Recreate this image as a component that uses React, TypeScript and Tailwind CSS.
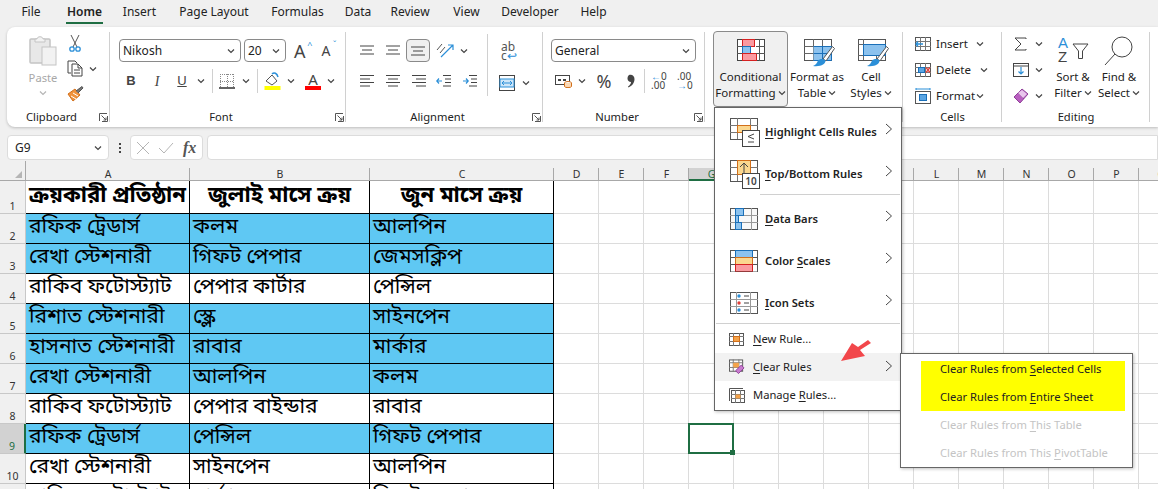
import React from "react";

const sans = "font-['Noto_Sans','Open_Sans',sans-serif]";
const ben = "font-['Noto_Sans_Bengali','Lohit_Bengali','Noto_Sans','Liberation_Sans',sans-serif]";

function Chev({ className = "", dim = false }: { className?: string; dim?: boolean }) {
  return (
    <svg width="8" height="6" viewBox="0 0 8 6" className={`shrink-0 ${className}`}>
      <path d="M1 1.5 L4 4.5 L7 1.5" fill="none" stroke={dim ? "#b5b5b5" : "#444"} strokeWidth="1.2" />
    </svg>
  );
}

function Launcher({ className = "" }: { className?: string }) {
  return (
    <svg width="9" height="9" viewBox="0 0 9 9" className={`shrink-0 ${className}`}>
      <path d="M0.5 8V0.5H8M8.5 3V8.5H3M2.5 2.5L7 7M7 4.5V7H4.5" fill="none" stroke="#555" strokeWidth="1" />
    </svg>
  );
}

function Group({ w, label, launcher, children }: { w: number; label: string; launcher?: boolean; children: React.ReactNode }) {
  return (
    <div style={{ width: w }} className="shrink-0 h-[100px] relative flex flex-col">
      <div className="flex-1 min-h-0">{children}</div>
      <div className={`h-[22px] flex items-start justify-center pt-[4px] text-[11.2px] text-[#222] leading-[16px] ${launcher ? "pr-[14px]" : ""}`}>
        <span>{label}</span>
      </div>
      {launcher && <Launcher className="absolute right-[2px] bottom-[5px]" />}
      <div className="absolute right-0 top-[5px] bottom-[5px] w-px bg-[#d0d0d0]" />
    </div>
  );
}

function GridIcon({ w, h, cols, rows, children }: { w: number; h: number; cols: number[]; rows: number[]; children?: React.ReactNode }) {
  return (
    <svg width={w} height={h} viewBox={`0 0 ${w} ${h}`} className="shrink-0">
      <rect x=".5" y=".5" width={w - 1} height={h - 1} fill="#fff" stroke="#555" />
      {cols.map((c) => (
        <path key={c} d={`M${c + 0.5} 0V${h}`} stroke="#777" />
      ))}
      {rows.map((c) => (
        <path key={c} d={`M0 ${c + 0.5}H${w}`} stroke="#777" />
      ))}
      {children}
    </svg>
  );
}

function Lines({ d }: { d: string }) {
  return (
    <svg width="16" height="14" viewBox="0 0 16 14" className="shrink-0">
      <path d={d} stroke="#444" strokeWidth="1" fill="none" />
    </svg>
  );
}

function Clipboard() {
  return (
    <Group w={103} label="Clipboard" launcher>
      <div className="flex pt-[8px] pl-[19px]">
        <div className="w-[34px] flex flex-col items-center">
          <svg width="28" height="31" viewBox="0 0 28 31">
            <rect x="1" y="4" width="20" height="24" rx="1" fill="#e8e8e8" stroke="#c4c4c4" strokeWidth="1.5" />
            <path d="M6 4H8C8 1 14 1 14 4H16V7H6Z" fill="#f2f2f2" stroke="#c4c4c4" />
            <rect x="13" y="12" width="14" height="18" fill="#f2f2f2" stroke="#c4c4c4" />
          </svg>
          <div className="text-[11.2px] text-[#a8a8a8] mt-[4px] leading-[16px]">Paste</div>
          <Chev dim className="mt-[4px]" />
        </div>
        <div className="ml-[7px] flex flex-col">
          <svg width="16" height="17" viewBox="0 0 16 17">
            <path d="M4 0L10 12M12 0L6 12" stroke="#555" fill="none" />
            <circle cx="5" cy="14" r="2.2" fill="none" stroke="#2b8fd8" strokeWidth="1.3" />
            <circle cx="11" cy="14" r="2.2" fill="none" stroke="#2b8fd8" strokeWidth="1.3" />
          </svg>
          <div className="flex items-center mt-[8px]">
            <svg width="17" height="17" viewBox="0 0 17 17">
              <path d="M4 13H1V1H8L10 3" fill="#fff" stroke="#444" />
              <path d="M5 4H11L15 8V16H5Z" fill="#fff" stroke="#444" />
              <path d="M7 10H13M7 13H13M11 4V8H15" fill="none" stroke="#444" />
            </svg>
            <Chev className="ml-[5px]" />
          </div>
          <svg width="17" height="16" viewBox="0 0 17 16" className="mt-[9px]">
            <path d="M1 8L8 3L13 9L6 15Z" fill="#f0923b" stroke="#d26f1a" />
            <path d="M4 10L9 13M6 7L11 10" stroke="#fff" />
            <path d="M9 5L15 0.5L16 2L11 7" fill="#777" stroke="#555" />
          </svg>
        </div>
      </div>
    </Group>
  );
}

function Combo({ w, label, className = "" }: { w: number; label: string; className?: string }) {
  return (
    <div style={{ width: w }} className={`h-[23px] rounded-[4px] border border-[#8a8a8a] bg-white flex items-center justify-between pl-[3px] pr-[5px] text-[12px] text-[#222] shrink-0 ${className}`}>
      <span>{label}</span>
      <Chev />
    </div>
  );
}

function Font() {
  return (
    <Group w={236} label="Font" launcher>
      <div className="pt-[12px] pl-[9px]">
        <div className="flex items-center">
          <Combo w={122} label="Nikosh" />
          <Combo w={42} label="20" className="ml-[3px]" />
          <span className="ml-[8px] text-[18px] leading-[20px] text-[#444] relative">A<span className="absolute -right-[7px] -top-[1px] text-[9px] leading-[10px] text-[#2b8fd8]">^</span></span>
          <span className="ml-[16px] text-[14px] leading-[20px] text-[#444] relative">A<span className="absolute -right-[6px] -top-[1px] text-[8px] leading-[10px] text-[#2b8fd8]">ˇ</span></span>
        </div>
        <div className="flex items-center mt-[8px] h-[22px] pl-[6px]">
          <span className="w-[12px] font-['Liberation_Sans'] font-bold text-[13px] text-[#444] text-center">B</span>
          <span className="ml-[14px] w-[12px] font-['Liberation_Serif'] italic text-[14px] text-[#444] text-center">I</span>
          <span className="ml-[13px] w-[12px] font-['Liberation_Sans'] underline text-[13px] text-[#444] text-center">U</span>
          <Chev className="ml-[9px]" />
          <div className="ml-[7px] w-px h-[24px] bg-[#d0d0d0]" />
          <svg width="16" height="16" viewBox="0 0 16 16" className="ml-[6px]">
            <path d="M1 1.5H15M1 8.5H15M1.5 1V14M8.5 1V14M14.5 1V14" stroke="#888" strokeDasharray="1 1" fill="none" />
            <path d="M0 15H16" stroke="#222" strokeWidth="1.4" />
          </svg>
          <Chev className="ml-[7px]" />
          <div className="ml-[7px] w-px h-[24px] bg-[#d0d0d0]" />
          <svg width="17" height="18" viewBox="0 0 17 18" className="ml-[6px]">
            <path d="M2 9L8 3L13 9L8 13Z" fill="#fff" stroke="#555" />
            <path d="M8 2C10 0 13 1 14 5" fill="none" stroke="#2b8fd8" strokeWidth="1.5" />
            <rect x="0.5" y="14" width="16" height="4" fill="#ffff00" />
          </svg>
          <Chev className="ml-[6px]" />
          <div className="ml-[10px] w-[16px] flex flex-col items-center text-[15px] leading-[14px] text-[#444]">
            <span>A</span>
            <span className="block w-[16px] h-[4px] bg-[#ff0000]" />
          </div>
          <Chev className="ml-[6px]" />
        </div>
      </div>
    </Group>
  );
}

const AL_T = "M1 2H15M3 6H13M1 10H15";
const AL_M = "M1 3H15M3 7H13M1 11H15";
const AL_L = "M1 1.5H15M1 5H11M1 8.5H15M1 12H11";
const AL_C = "M1 1.5H15M3 5H13M1 8.5H15M3 12H13";
const AL_R = "M1 1.5H15M5 5H15M1 8.5H15M5 12H15";

function Alignment() {
  return (
    <Group w={197} label="Alignment" launcher>
      <div className="flex pl-[13px]">
        <div className="w-[129px] pt-[12px] relative">
          <div className="flex items-center h-[23px]">
            <Lines d={AL_T} />
            <div className="ml-[10px]"><Lines d={AL_T} /></div>
            <div className="ml-[5px] w-[24px] h-[23px] rounded-[4px] border border-[#8a8a8a] bg-[#f0f0f0] flex items-center justify-center"><Lines d={AL_M} /></div>
            <svg width="19" height="17" viewBox="0 0 19 17" className="ml-[6px]">
              <path d="M1 8L6 2M4 11L9 5" stroke="#555" fill="none" />
              <path d="M5 15L17 3M12 3H17V8" stroke="#2b8fd8" strokeWidth="1.2" fill="none" />
            </svg>
            <Chev className="ml-[5px]" />
          </div>
          <div className="flex items-center mt-[8px] h-[22px]">
            <Lines d={AL_L} />
            <div className="ml-[10px]"><Lines d={AL_C} /></div>
            <div className="ml-[10px]"><Lines d={AL_R} /></div>
            <svg width="16" height="14" viewBox="0 0 16 14" className="ml-[9px]">
              <path d="M7 1.5H15M9 5H15M9 8.5H15M7 12H15" stroke="#444" fill="none" />
              <path d="M6 7H1M3 4.5L0.8 7L3 9.5" stroke="#2b8fd8" fill="none" strokeWidth="1.2" />
            </svg>
            <svg width="16" height="14" viewBox="0 0 16 14" className="ml-[10px]">
              <path d="M7 1.5H15M9 5H15M9 8.5H15M7 12H15" stroke="#444" fill="none" />
              <path d="M1 7H6M4 4.5L6.2 7L4 9.5" stroke="#2b8fd8" fill="none" strokeWidth="1.2" />
            </svg>
          </div>
          <div className="absolute right-0 top-[7px] h-[62px] w-px bg-[#d0d0d0]" />
        </div>
        <div className="pl-[13px] pt-[15px]">
          <div className="text-[12px] leading-[9px] text-[#555] w-[18px] h-[18px]">ab<br />c<span className="text-[#2b8fd8]">↩</span></div>
          <div className="flex items-center mt-[15px] -ml-[2px]">
            <svg width="16" height="16" viewBox="0 0 16 16">
              <rect x=".5" y=".5" width="15" height="15" fill="#fff" stroke="#444" />
              <rect x="1" y="4" width="14" height="8" fill="#cfe6f8" stroke="#2b8fd8" />
              <path d="M3 8H13M5 6L3 8L5 10M11 6L13 8L11 10" stroke="#2b8fd8" fill="none" />
            </svg>
            <Chev className="ml-[7px]" />
          </div>
        </div>
      </div>
    </Group>
  );
}

function NumberGroup() {
  return (
    <Group w={162} label="Number" launcher>
      <div className="pt-[12px] pl-[8px]">
        <Combo w={145} label="General" />
        <div className="flex items-center mt-[8px] h-[22px] pl-[4px]">
          <svg width="17" height="14" viewBox="0 0 17 14">
            <rect x=".5" y="1.5" width="14" height="9" fill="#fff" stroke="#444" />
            <path d="M3 6H6M8 6H11" stroke="#444" strokeWidth="2" />
            <ellipse cx="13" cy="9" rx="3.5" ry="1.5" fill="#fff" stroke="#d26f1a" />
            <path d="M9.5 9V12.5C10 14 16 14 16.5 12.5V9" fill="#fbd9b5" stroke="#d26f1a" />
          </svg>
          <Chev className="ml-[6px]" />
          <span className="ml-[10px] w-[16px] text-center text-[18px] leading-[20px] text-[#444]">%</span>
          <svg width="8" height="14" viewBox="0 0 8 14" className="ml-[15px]">
            <path d="M2 1C5 0 7.5 2 7.5 5C7.5 9 5 12 1.5 13.5L1 12.5C3 11 4 9.5 4 8C2 8 .5 6.5 .5 4.5C.5 3 1 1.8 2 1Z" fill="#444" />
          </svg>
          <div className="ml-[9px] w-px h-[24px] bg-[#d0d0d0]" />
          <div className="ml-[6px] w-[16px] text-[10px] leading-[9px] text-[#444] whitespace-nowrap"><span className="text-[#2b8fd8]">←</span>0<br />.00</div>
          <div className="ml-[10px] w-[17px] text-[10px] leading-[9px] text-[#444] whitespace-nowrap">.00<br /><span className="text-[#2b8fd8]">→</span>0</div>
        </div>
      </div>
    </Group>
  );
}

function Brush() {
  return (
    <>
      <path d="M19 20L28.5 7.5L30.5 9.5L22 22Z" fill="#fff" stroke="#555" />
      <path d="M9 27C12 26 13 24 14 21.5C16 19.5 20 19.5 21.5 21.5C21.5 25 17 28 9 27Z" fill="#2b8fd8" />
    </>
  );
}

function BigButton({ icon, l1, l2, className = "", active = false, iconClass = "h-[30px]" }: { icon: React.ReactNode; l1: string; l2: string; className?: string; active?: boolean; iconClass?: string }) {
  return (
    <div className={`flex flex-col items-center shrink-0 text-[11.5px] leading-[16px] text-[#222] ${className} ${active ? "rounded-[4px] border border-[#8a8a8a] bg-[#f0f0f0]" : ""}`}>
      <div className={`flex items-start ${iconClass}`}>{icon}</div>
      <div className="whitespace-nowrap">{l1}</div>
      <div className="whitespace-nowrap flex items-center gap-[2px]">{l2}<Chev /></div>
    </div>
  );
}

function Styles() {
  return (
    <Group w={198} label="">
      <div className="flex pt-[4px] pl-[8px]">
        <BigButton
          active
          className="w-[75px] h-[76px] pt-[7px]"
          l1="Conditional"
          l2="Formatting"
          icon={
            <svg width="28" height="23" viewBox="0 0 28 23">
              <rect x=".5" y=".5" width="27" height="21" fill="#fff" stroke="#444" />
              <rect x="5.5" y=".5" width="12" height="7" fill="#fa9aa0" stroke="#d62020" />
              <rect x="5.5" y="7.5" width="8" height="7" fill="#8cc2ee" stroke="#1a6fb8" />
              <rect x="5.5" y="14.5" width="14" height="7" fill="#fa9aa0" stroke="#d62020" />
              <path d="M22.5 0V22M0 7.5H5M0 14.5H5M19 7.5H28M19 14.5H28" stroke="#555" />
            </svg>
          }
        />
        <BigButton
          className="w-[56px] ml-[1px] pt-[8px]"
          iconClass="h-[30px] ml-[4px]"
          l1="Format as"
          l2="Table"
          icon={
            <svg width="31" height="28" viewBox="0 0 31 28" className="shrink-0">
              <rect x=".5" y=".5" width="27" height="21" fill="#fff" stroke="#555" />
              <path d="M9.5 0V21M18.5 0V21M0 7.5H27M0 14.5H27" stroke="#666" />
              <rect x="9.5" y="7.5" width="18" height="14" fill="#8cc2ee" />
              <path d="M9.5 7.5H27.5V21.5H9.5M18.5 7.5V21.5M9.5 14.5H27.5" fill="none" stroke="#1a6fb8" />
              <Brush />
            </svg>
          }
        />
        <BigButton
          className="w-[52px] pt-[8px]"
          iconClass="h-[30px] ml-[4px]"
          l1="Cell"
          l2="Styles"
          icon={
            <svg width="31" height="28" viewBox="0 0 31 28" className="shrink-0">
              <rect x=".5" y=".5" width="27" height="21" fill="#fff" stroke="#555" />
              <path d="M0 5.5H27M0 16.5H27M5.5 0V21M18.5 16V21" stroke="#666" />
              <rect x="5.5" y="5.5" width="22" height="11" fill="#8cc2ee" stroke="#1a6fb8" />
              <Brush />
            </svg>
          }
        />
      </div>
    </Group>
  );
}

function CellRow({ icon, label, chevMl, mt = "" }: { icon: React.ReactNode; label: string; chevMl: number; mt?: string }) {
  return (
    <div className={`flex items-center h-[16px] text-[11.5px] text-[#222] ${mt}`}>
      <div className="w-[16px] flex justify-center shrink-0">{icon}</div>
      <span className="ml-[5px]">{label}</span>
      <Chev className="ml-auto" />
      <span style={{ width: chevMl }} />
    </div>
  );
}

function Cells() {
  return (
    <Group w={99} label="Cells">
      <div className="pt-[9px] pl-[12px] pr-[13px]">
        <CellRow
          label="Insert"
          chevMl={5}
          icon={
            <GridIcon w={16} h={14} cols={[5, 10]} rows={[4, 9]}>
              <path d="M8 7H1M3 4.5L1 7L3 9.5" stroke="#2b8fd8" fill="none" strokeWidth="1.3" />
            </GridIcon>
          }
        />
        <CellRow
          mt="mt-[10px]"
          label="Delete"
          chevMl={1}
          icon={
            <GridIcon w={16} h={14} cols={[5, 10]} rows={[4, 9]}>
              <rect x="3.5" y="4.5" width="6" height="5" fill="#5aa5e3" stroke="#1a6fb8" />
              <path d="M11 4.5L15 9.5M15 4.5L11 9.5" stroke="#e0403a" strokeWidth="1.3" />
            </GridIcon>
          }
        />
        <CellRow
          mt="mt-[10px]"
          label="Format"
          chevMl={5}
          icon={
            <svg width="16" height="16" viewBox="0 0 16 16">
              <rect x=".5" y="3.5" width="15" height="12" fill="#fff" stroke="#555" />
              <rect x="4.5" y="6.5" width="7" height="6" fill="#5aa5e3" stroke="#1a6fb8" />
              <path d="M1 1H15M1 0V2M15 0V2" stroke="#2b8fd8" />
            </svg>
          }
        />
      </div>
    </Group>
  );
}

function Editing() {
  return (
    <Group w={148} label="Editing">
      <div className="flex pt-[9px] pl-[11px]">
        <div className="w-[36px] flex flex-col gap-[10px]">
          <div className="flex items-center h-[16px]">
            <svg width="16" height="14" viewBox="0 0 16 14"><path d="M13 2V1H2L8 7L2 13H13V12" fill="none" stroke="#444" /></svg>
            <Chev className="ml-[6px]" />
          </div>
          <div className="flex items-center h-[16px]">
            <svg width="16" height="14" viewBox="0 0 16 14">
              <rect x=".5" y=".5" width="15" height="13" fill="#fff" stroke="#444" />
              <path d="M0 3H16" stroke="#444" />
              <path d="M8 4V11M5.5 8.5L8 11L10.5 8.5" stroke="#2b8fd8" fill="none" strokeWidth="1.2" />
            </svg>
            <Chev className="ml-[6px]" />
          </div>
          <div className="flex items-center h-[16px]">
            <svg width="16" height="16" viewBox="0 0 16 16">
              <path d="M1 9L9 1L15 6L7 15Z" fill="#b95fc0" stroke="#8f3f98" />
              <path d="M5 5L11 11" stroke="#8f3f98" />
              <path d="M9 2L14 6L10 10L5 5Z" fill="#e9c5ec" />
            </svg>
            <Chev className="ml-[6px]" />
          </div>
        </div>
        <div className="flex ml-[1px]">
          <BigButton
            className="w-[46px]"
            iconClass="h-[33px]"
            l1="Sort &"
            l2="Filter"
            icon={
              <div className="relative w-[32px] h-[28px] font-['Liberation_Sans'] text-[15px] leading-[13px]">
                <span className="absolute left-[1px] top-0 text-[#2b8fd8]">A</span>
                <span className="absolute left-[1px] top-[14px] text-[#444]">Z</span>
                <svg width="17" height="17" viewBox="0 0 17 17" className="absolute left-[15px] top-[7px]">
                  <path d="M1 1H16L10.5 8V15.5H6.5V8Z" fill="#fff" stroke="#444" />
                </svg>
              </div>
            }
          />
          <BigButton
            className="w-[46px]"
            iconClass="h-[33px]"
            l1="Find &"
            l2="Select"
            icon={
              <svg width="30" height="30" viewBox="0 0 30 30">
                <circle cx="18" cy="11" r="10" fill="#fff" stroke="#444" />
                <path d="M11 18L1 29" stroke="#444" />
              </svg>
            }
          />
        </div>
      </div>
    </Group>
  );
}

function Ribbon() {
  return (
    <div className="h-[100px] ml-[7px] bg-white rounded-l-[8px] shadow-[0_1px_3px_rgba(0,0,0,0.22)] flex">
      <Clipboard />
      <Font />
      <Alignment />
      <NumberGroup />
      <Styles />
      <Cells />
      <Editing />
    </div>
  );
}

const tabs: [string, number, number][] = [
  ["File", 20, 21],
  ["Home", 37, 66],
  ["Insert", 33, 123],
  ["Page Layout", 72, 178],
  ["Formulas", 53, 271],
  ["Data", 26, 345],
  ["Review", 34, 393],
  ["View", 27, 453],
  ["Developer", 60, 500],
  ["Help", 27, 580],
];

function Tabs() {
  return (
    <div className="h-[27px] flex text-[12px] text-[#222]">
      {tabs.map(([t, w, x], i) => (
        <div key={t} style={{ marginLeft: i === 0 ? x : x - tabs[i - 1][2] - tabs[i - 1][1], width: w }} className={`h-[24px] flex items-center justify-center whitespace-nowrap relative ${t === "Home" ? "font-semibold" : ""}`}>
          {t}
          {t === "Home" && <div className="absolute left-0 right-0 bottom-0 h-[2px] bg-[#1f6e43]" />}
        </div>
      ))}
    </div>
  );
}

function FormulaBar() {
  return (
    <div className="h-[34px] pt-[8px] flex items-start">
      <div className="ml-[7px] w-[102px] h-[25px] bg-white rounded-[4px] border border-[#dcdcdc] flex items-center justify-between pl-[7px] pr-[6px] text-[12px] text-[#222]">
        <span>G9</span>
        <Chev />
      </div>
      <div className="w-[21px] h-[25px] flex flex-col items-center justify-center gap-[2px]">
        <span className="w-[2px] h-[2px] bg-[#444]" />
        <span className="w-[2px] h-[2px] bg-[#444]" />
        <span className="w-[2px] h-[2px] bg-[#444]" />
      </div>
      <div className="w-[73px] h-[25px] bg-white rounded-[4px] border border-[#dcdcdc] flex items-center pl-[5px]">
        <svg width="14" height="14" viewBox="0 0 14 14"><path d="M1 1L13 13M13 1L1 13" stroke="#b5b5b5" /></svg>
        <svg width="16" height="12" viewBox="0 0 16 12" className="ml-[8px]"><path d="M1 6L6 11L15 1" fill="none" stroke="#b5b5b5" /></svg>
        <span className="ml-[9px] font-['Liberation_Serif'] italic font-bold text-[16px] text-[#555]">fx</span>
      </div>
      <div className="ml-[4px] flex-1 h-[25px] bg-white rounded-l-[4px] border border-[#dcdcdc]" />
    </div>
  );
}

const rows: [string, string, string][] = [
  ["ক্রয়কারী প্রতিষ্ঠান", "জুলাই মাসে ক্রয়", "জুন মাসে ক্রয়"],
  ["রফিক ট্রেডার্স", "কলম", "আলপিন"],
  ["রেখা স্টেশনারী", "গিফট পেপার", "জেমসক্লিপ"],
  ["রাকিব ফটোস্ট্যাট", "পেপার কার্টার", "পেন্সিল"],
  ["রিশাত স্টেশনারী", "স্কেল", "সাইনপেন"],
  ["হাসনাত স্টেশনারী", "রাবার", "মার্কার"],
  ["রেখা স্টেশনারী", "আলপিন", "কলম"],
  ["রাকিব ফটোস্ট্যাট", "পেপার বাইন্ডার", "রাবার"],
  ["রফিক ট্রেডার্স", "পেন্সিল", "গিফট পেপার"],
  ["রেখা স্টেশনারী", "সাইনপেন", "আলপিন"],
  ["রাকিব ফটোস্ট্যাট", "মার্কার", "গিফট পেপার"],
];
const blue = [1, 2, 4, 5, 6, 8];
const extra = ["D", "E", "F", "G", "H", "I", "J", "K", "L", "M", "N", "O", "P", "Q"];

function Sheet() {
  return (
    <div className="relative grid grid-cols-[26px_164px_180px_184px_repeat(14,45px)] grid-rows-[20px_33px_repeat(11,30px)] overflow-hidden h-[328px] text-[10.5px] text-[#333] leading-none">
      <div className="bg-[#f0f0f0] border-r border-b border-[#a8a8a8] relative">
        <div className="absolute right-[3px] bottom-[2px] w-0 h-0 border-l-[7px] border-l-transparent border-b-[7px] border-b-[#b5b5b5]" />
      </div>
      {["A", "B", "C", ...extra].map((c) => (
        <div key={c} className="relative border-b border-[#a8a8a8] bg-[#f0f0f0] flex items-end justify-center pb-[1px]">
          {c === "G" && <div className="absolute left-0 right-0 bottom-[-1px] h-[13px] bg-[#d2d2d2] border-b-2 border-b-[#1f6e43]" />}
          <span className={`relative ${c === "G" ? "text-[#1f6e43]" : ""}`}>{c}</span>
          <div className="absolute right-0 bottom-0 w-px h-[12px] bg-[#a8a8a8]" />
        </div>
      ))}
      {rows.map((r, i) => {
        const isBlue = blue.includes(i);
        return (
          <React.Fragment key={i}>
            <div className={`border-b border-r flex items-end justify-center pb-[2px] ${i === 8 ? "bg-[#d2d2d2] border-b-[#c8c8c8] border-r-2 border-r-[#1f6e43] text-[#1f6e43]" : "bg-[#f0f0f0] border-[#c8c8c8]"}`}>{i + 1}</div>
            {r.map((t, j) => (
              <div key={j} className={`border-r border-b border-black flex items-center text-black whitespace-nowrap overflow-hidden ${ben} ${i === 0 ? "font-bold justify-center text-[22px]" : "pl-[3px] text-[21px]"} ${isBlue ? "bg-[#5fc8f3]" : "bg-white"}`}>
                {t}
              </div>
            ))}
            {extra.map((c) => (
              <div key={c} className={`border-r border-b border-[#dcdcdc] bg-white relative ${i === 8 && c === "G" ? "z-10" : ""}`}>
                {i === 8 && c === "G" && (
                  <div className="absolute -left-px -top-px right-[-1px] bottom-[-1px] border-2 border-[#1f6e43]">
                    <div className="absolute right-[-3px] bottom-[-3px] w-[5px] h-[5px] bg-[#1f6e43]" />
                  </div>
                )}
              </div>
            ))}
          </React.Fragment>
        );
      })}
    </div>
  );
}

function U({ children }: { children: React.ReactNode }) {
  return <span className="underline underline-offset-2">{children}</span>;
}

function MenuArrow({ small = false }: { small?: boolean }) {
  return (
    <svg width="8" height="12" viewBox="0 0 8 12" className={`absolute right-[8px] ${small ? "top-[calc(50%-7px)]" : "top-[calc(50%-9px)]"}`}>
      <path d="M1 1L6.5 6L1 11" fill="none" stroke="#444" />
    </svg>
  );
}

function BigItem({ icon, children }: { icon: React.ReactNode; children: React.ReactNode }) {
  return (
    <div className="h-[42px] relative flex items-center pl-[15px] text-[11.2px] font-semibold text-[#222]">
      <div className="w-[30px] h-[28px] flex items-center shrink-0">{icon}</div>
      <div className="ml-[5px]">{children}</div>
      <MenuArrow />
    </div>
  );
}

function SmallItem({ icon, children, active = false, arrow = false }: { icon: React.ReactNode; children: React.ReactNode; active?: boolean; arrow?: boolean }) {
  return (
    <div className={`h-[28px] relative flex items-center pl-[14px] text-[11.2px] text-[#222] ${active ? "bg-[#f2f2f2]" : ""}`}>
      <div className="w-[16px] shrink-0 flex">{icon}</div>
      <div className="ml-[8px]">{children}</div>
      {arrow && <MenuArrow small />}
    </div>
  );
}

function CFMenu() {
  const small = <GridIcon w={15} h={13} cols={[4, 10]} rows={[3, 8]}><rect x="4.5" y="3.5" width="6" height="5" fill="#f5a34a" stroke="#d26f1a" /></GridIcon>;
  return (
    <div className={`absolute left-[714px] top-[107px] w-[188px] h-[304px] bg-white border border-[#666] shadow-[1px_1px_3px_rgba(0,0,0,0.25)] z-20 pt-[3px] ${sans}`}>
      <BigItem icon={
        <svg width="30" height="29" viewBox="0 0 30 29">
          <rect x=".5" y=".5" width="27" height="21" fill="#fff" stroke="#555" />
          <path d="M7.5 0V21M20.5 0V21M0 7.5H28M0 14.5H28" stroke="#777" />
          <rect x="7.5" y="7.5" width="13" height="7" fill="#fbd78f" stroke="#d26f1a" />
          <rect x="12.5" y="12.5" width="17" height="16" fill="#fff" stroke="#444" />
          <path d="M24 16L18 18.5L24 21M18 24H24" fill="none" stroke="#444" />
        </svg>
      }><U>H</U>ighlight Cells Rules</BigItem>
      <BigItem icon={
        <svg width="30" height="29" viewBox="0 0 30 29">
          <rect x=".5" y=".5" width="27" height="21" fill="#fff" stroke="#555" />
          <path d="M7.5 0V21M20.5 0V21M0 7.5H28M0 14.5H28" stroke="#777" />
          <rect x="7.5" y=".5" width="13" height="14" fill="#fbd78f" stroke="#d26f1a" />
          <path d="M14 14V3M10 7L14 3L18 7" fill="none" stroke="#444" />
          <rect x="12.5" y="13.5" width="17" height="15" fill="#fff" stroke="#444" />
          <text x="21" y="25" textAnchor="middle" fontSize="10" fontFamily="Noto Sans" fill="#444">10</text>
        </svg>
      }><U>T</U>op/Bottom Rules</BigItem>
      <div className="h-px bg-[#d0d0d0] ml-[45px] mr-px -mt-px" />
      <div className="pt-[3px] -mb-px">
        <BigItem icon={
          <svg width="28" height="22" viewBox="0 0 28 22">
            <rect x=".5" y=".5" width="27" height="21" fill="#f8f8f8" stroke="#555" />
            <path d="M0 7.5H28M0 14.5H28M21.5 0V22" stroke="#999" />
            <rect x="5.5" y=".5" width="8" height="7" fill="#8cc2ee" stroke="#1a6fb8" />
            <rect x="5.5" y="7.5" width="3" height="7" fill="#8cc2ee" stroke="#1a6fb8" />
            <rect x="5.5" y="14.5" width="6" height="7" fill="#8cc2ee" stroke="#1a6fb8" />
          </svg>
        }><U>D</U>ata Bars</BigItem>
        <BigItem icon={
          <svg width="28" height="22" viewBox="0 0 28 22">
            <rect x=".5" y=".5" width="27" height="7" fill="#fff" stroke="#555" />
            <rect x="5.5" y=".5" width="17" height="7" fill="#8cc2ee" stroke="#1a6fb8" />
            <rect x="5.5" y="7.5" width="17" height="7" fill="#fbd78f" stroke="#d26f1a" />
            <rect x="5.5" y="14.5" width="17" height="7" fill="#fa9aa0" stroke="#d62020" />
            <path d="M0 7.5H5M0 14.5H5M23 7.5H28M23 14.5H28M.5 7V22H27.5V7" stroke="#555" fill="none" />
          </svg>
        }>Color <U>S</U>cales</BigItem>
        <BigItem icon={
          <svg width="28" height="22" viewBox="0 0 28 22">
            <rect x=".5" y=".5" width="27" height="21" fill="#fff" stroke="#555" />
            <path d="M0 7.5H28M0 14.5H28M6.5 0V22M20.5 0V22" stroke="#999" />
            <circle cx="9" cy="4" r="1.7" fill="#2b8fd8" /><circle cx="9" cy="11" r="1.7" fill="#e0403a" /><circle cx="9" cy="18" r="1.7" fill="#2b8fd8" />
            <path d="M14 4H19M14 11H19M14 18H19" stroke="#444" />
          </svg>
        }><U>I</U>con Sets</BigItem>
      </div>
      <div className="h-px bg-[#d0d0d0] mx-[1px] relative" />
      <div className="pt-[1px]">
        <SmallItem icon={small}><U>N</U>ew Rule...</SmallItem>
        <SmallItem active arrow icon={
          <svg width="17" height="16" viewBox="0 0 17 16">
            <rect x=".5" y=".5" width="14" height="12" fill="#fff" stroke="#555" />
            <path d="M4.5 0V13M10.5 0V13M0 3.5H15M0 8.5H15" stroke="#777" />
            <rect x="4.5" y="3.5" width="6" height="5" fill="#f5a34a" />
            <path d="M7 12L13 6L16 9L10 15Z" fill="#c77bce" stroke="#8f3f98" />
          </svg>
        }><U>C</U>lear Rules</SmallItem>
        <SmallItem icon={
          <svg width="16" height="15" viewBox="0 0 16 15">
            <path d="M.5 13V.5H14" fill="none" stroke="#555" />
            <rect x="2.5" y="2.5" width="13" height="12" fill="#fff" stroke="#555" />
            <path d="M6.5 2V15M11.5 2V15M2 6.5H16M2 10.5H16" stroke="#777" />
            <rect x="6.5" y="6.5" width="5" height="4" fill="#f5a34a" />
          </svg>
        }>Manage <U>R</U>ules...</SmallItem>
      </div>
    </div>
  );
}

function SubMenu() {
  const base = "h-[28px] flex items-center pl-[39px]";
  return (
    <div className={`absolute left-[900px] top-[353px] w-[233px] h-[115px] bg-white border border-[#666] shadow-[1px_1px_3px_rgba(0,0,0,0.25)] z-30 pt-[1px] text-[11.2px] ${sans}`}>
      <div className="relative">
        <div className="absolute left-[20px] top-[6px] w-[204px] h-[50px] bg-[#ffff00]" />
        <div className={`relative ${base} text-[#222]`}>Clear Rules from&nbsp;<U>S</U>elected Cells</div>
        <div className={`relative ${base} text-[#222]`}>Clear Rules from&nbsp;<U>E</U>ntire Sheet</div>
        <div className={`${base} text-[#c4c4c4]`}>Clear Rules from&nbsp;<U>T</U>his Table</div>
        <div className={`${base} text-[#c4c4c4]`}>Clear Rules from This&nbsp;<U>P</U>ivotTable</div>
      </div>
    </div>
  );
}

function RedArrow() {
  return (
    <svg width="36" height="26" viewBox="0 0 36 26" className="absolute left-[838px] top-[338px] z-40">
      <path d="M3 23L14 5L20 9L30 2L33 5L22 12L27 18Z" fill="#f2474b" />
    </svg>
  );
}

export default function App() {
  return (
    <div className={`relative w-[1158px] h-[489px] overflow-hidden bg-[#f0f0f0] ${sans}`}>
      <Tabs />
      <Ribbon />
      <FormulaBar />
      <Sheet />
      <CFMenu />
      <SubMenu />
      <RedArrow />
    </div>
  );
}
